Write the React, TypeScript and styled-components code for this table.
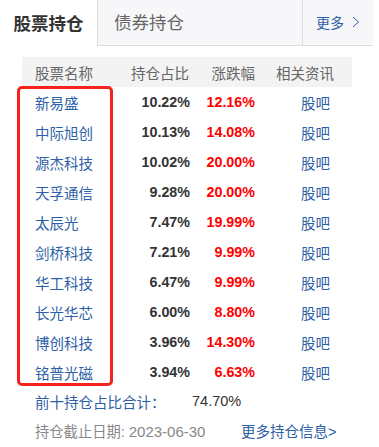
import styled, { createGlobalStyle } from "styled-components"

const GlobalStyle = createGlobalStyle`
    body{
        margin: 0;
        background: #fff;
        font-family: "Liberation Sans", "Noto Sans CJK SC", sans-serif;
    }
`

interface Holding {
    name: string
    ratio: string
    change: string
}

const holdings: Holding[] = [
    { name: "新易盛", ratio: "10.22%", change: "12.16%" },
    { name: "中际旭创", ratio: "10.13%", change: "14.08%" },
    { name: "源杰科技", ratio: "10.02%", change: "20.00%" },
    { name: "天孚通信", ratio: "9.28%", change: "20.00%" },
    { name: "太辰光", ratio: "7.47%", change: "19.99%" },
    { name: "剑桥科技", ratio: "7.21%", change: "9.99%" },
    { name: "华工科技", ratio: "6.47%", change: "9.99%" },
    { name: "长光华芯", ratio: "6.00%", change: "8.80%" },
    { name: "博创科技", ratio: "3.96%", change: "14.30%" },
    { name: "铭普光磁", ratio: "3.94%", change: "6.63%" },
]

export default function App() {
    return (
        <Page>
            <GlobalStyle />
            <Tabs>
                <Tab $active>股票持仓</Tab>
                <Tab>债券持仓</Tab>
                <More>
                    更多
                    <svg width="8" height="12" viewBox="0 0 8 12">
                        <polyline points="1,1 6.5,6 1,11" fill="none" stroke="#2d5fa6" strokeWidth="1" />
                    </svg>
                </More>
            </Tabs>
            <Content>
                <Table>
                    <HeadRow>
                        <HeadCell>股票名称</HeadCell>
                        <HeadCell $right>持仓占比</HeadCell>
                        <HeadCell $right>涨跌幅</HeadCell>
                        <HeadCell $pad={18}>相关资讯</HeadCell>
                    </HeadRow>
                    {holdings.map(h => (
                        <Row key={h.name}>
                            <Name>{h.name}</Name>
                            <Ratio>{h.ratio}</Ratio>
                            <Change>{h.change}</Change>
                            <Forum>股吧</Forum>
                        </Row>
                    ))}
                    <Highlight />
                </Table>
                <Summary>
                    <SummaryLabel>前十持仓占比合计：</SummaryLabel>
                    <SummaryValue>74.70%</SummaryValue>
                </Summary>
                <Footer>
                    <DateText>持仓截止日期: <Digits>2023-06-30</Digits></DateText>
                    <MoreLink>更多持仓信息&gt;</MoreLink>
                </Footer>
            </Content>
        </Page>
    )
}

const Page = styled.div`
    width: 379px;
    height: 447px;
    background: #fff;
    overflow: hidden;
`
const Tabs = styled.div`
    display: flex;
    width: 373px;
    height: 46px;
`
const Tab = styled.div<{ $active?: boolean }>`
    box-sizing: border-box;
    display: flex;
    align-items: center;
    height: 46px;
    font-size: 17.5px;
    padding: 0 16px 2px;
    ${p => p.$active ? `
        width: 97px;
        justify-content: center;
        padding: 0 0 2px;
        background: #fff;
        font-weight: 700;
        color: #333;
    ` : `
        flex: 1;
        background: #f7f7f9;
        color: #666;
        border-left: 1px solid #dcdcdc;
        border-bottom: 1px solid #dcdcdc;
    `}
`
const More = styled.div`
    box-sizing: border-box;
    width: 71px;
    height: 46px;
    display: flex;
    align-items: center;
    justify-content: center;
    gap: 8px;
    padding-bottom: 2px;
    background: #f7f7f9;
    border-left: 1px solid #dcdcdc;
    border-bottom: 1px solid #dcdcdc;
    color: #2d5fa6;
    font-size: 14px;
`
const Content = styled.div`
    padding: 11px 0 0 22px;
`
const Table = styled.div`
    position: relative;
    width: 330px;
`
const HeadRow = styled.div`
    display: grid;
    grid-template-columns: 108px 62px 66px 94px;
    height: 30px;
    align-items: center;
    background: #f3f3f3;
`
const HeadCell = styled.div<{ $right?: boolean; $pad?: number }>`
    font-size: 14.5px;
    color: #666;
    text-align: ${p => p.$right ? "right" : "left"};
    padding-left: ${p => p.$pad ?? (p.$right ? 0 : 13)}px;
    padding-right: ${p => p.$right ? 3 : 0}px;
`
const Row = styled.div`
    display: grid;
    grid-template-columns: 108px 62px 66px 94px;
    height: 30px;
    align-items: center;
`
const Name = styled.div`
    padding-left: 13px;
    font-size: 14.5px;
    color: #2d5fa6;
`
const Ratio = styled.div`
    text-align: right;
    padding-right: 2px;
    font-size: 14.3px;
    font-weight: 700;
    color: #333;
`
const Change = styled.div`
    text-align: right;
    padding-right: 3px;
    font-size: 14.3px;
    font-weight: 700;
    color: #ff0000;
`
const Forum = styled.div`
    padding-left: 43px;
    font-size: 14.5px;
    color: #2d5fa6;
`
const Highlight = styled.div`
    position: absolute;
    left: -5px;
    top: 29px;
    width: 96px;
    height: 300px;
    box-sizing: border-box;
    border: 3px solid #f5231c;
    border-radius: 5px;
`
const Summary = styled.div`
    display: flex;
    align-items: center;
    height: 28px;
    padding-left: 13px;
`
const SummaryLabel = styled.span`
    width: 157px;
    font-size: 14.5px;
    color: #2d5fa6;
`
const SummaryValue = styled.span`
    font-size: 14.5px;
    color: #333;
`
const Footer = styled.div`
    display: flex;
    align-items: center;
    height: 30px;
    padding-left: 13px;
`
const DateText = styled.span`
    width: 206px;
    font-size: 14.3px;
    color: #888;
`
const Digits = styled.span`
    font-size: 15px;
`
const MoreLink = styled.span`
    font-size: 14.5px;
    color: #2d5fa6;
`
